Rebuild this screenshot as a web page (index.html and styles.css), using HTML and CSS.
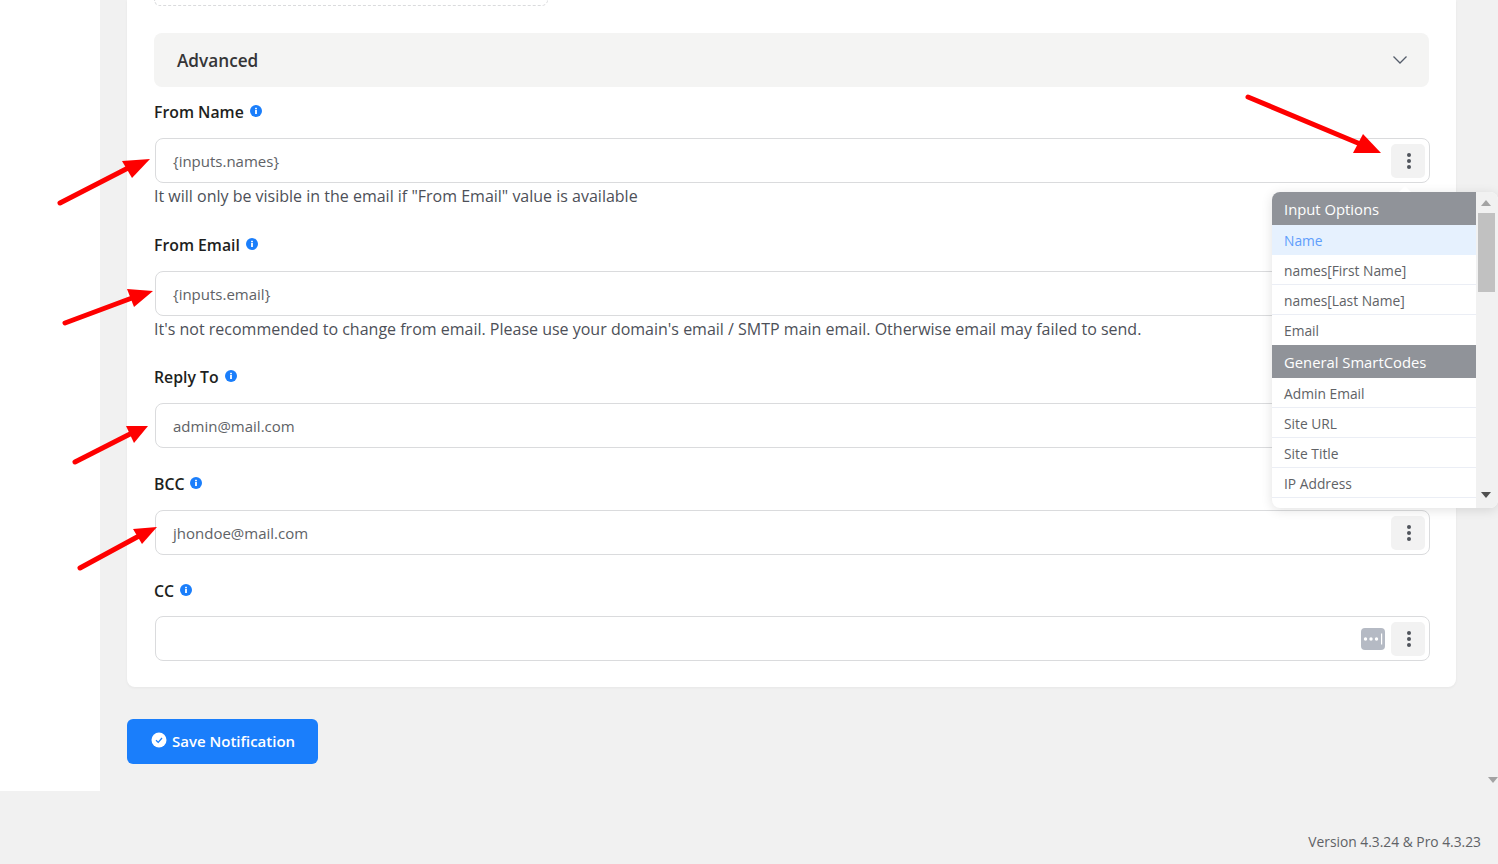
FILE: index.html
```html
<!DOCTYPE html>
<html lang="en">
<head>
<meta charset="utf-8">
<title>Notification settings</title>
<link rel="stylesheet" href="styles.css">
</head>
<body>
<div class="page">
  <div class="top">
    <aside class="sidebar"></aside>
    <main class="main">
      <section class="card">
        <div class="dashed"></div>
        <div class="advanced">
          <span>Advanced</span>
          <svg class="chevron" width="16" height="16" viewBox="0 0 16 16"><path d="M1.5 4.5 8 11l6.500-6.500" fill="none" stroke="#555d6b" stroke-width="1.300"/></svg>
        </div>

        <div class="label l-name">From Name<svg class="info" viewBox="0 0 12 12"><circle cx="6" cy="6" r="6" fill="#1a7efb"/><rect x="5.100" y="5" width="1.800" height="4" fill="#fff"/><rect x="5.100" y="2.800" width="1.800" height="1.500" fill="#fff"/></svg></div>
        <div class="input">
          <span class="value">{inputs.names}</span>
          <button class="kebab" type="button"><i></i><i></i><i></i></button>
        </div>
        <p class="help">It will only be visible in the email if "From Email" value is available</p>

        <div class="label l-email">From Email<svg class="info" viewBox="0 0 12 12"><circle cx="6" cy="6" r="6" fill="#1a7efb"/><rect x="5.100" y="5" width="1.800" height="4" fill="#fff"/><rect x="5.100" y="2.800" width="1.800" height="1.500" fill="#fff"/></svg></div>
        <div class="input">
          <span class="value">{inputs.email}</span>
          <button class="kebab" type="button"><i></i><i></i><i></i></button>
        </div>
        <p class="help">It's not recommended to change from email. Please use your domain's email / SMTP main email. Otherwise email may failed to send.</p>

        <div class="label l-reply">Reply To<svg class="info" viewBox="0 0 12 12"><circle cx="6" cy="6" r="6" fill="#1a7efb"/><rect x="5.100" y="5" width="1.800" height="4" fill="#fff"/><rect x="5.100" y="2.800" width="1.800" height="1.500" fill="#fff"/></svg></div>
        <div class="input">
          <span class="value">admin@mail.com</span>
          <button class="kebab" type="button"><i></i><i></i><i></i></button>
        </div>

        <div class="label l-bcc">BCC<svg class="info" viewBox="0 0 12 12"><circle cx="6" cy="6" r="6" fill="#1a7efb"/><rect x="5.100" y="5" width="1.800" height="4" fill="#fff"/><rect x="5.100" y="2.800" width="1.800" height="1.500" fill="#fff"/></svg></div>
        <div class="input">
          <span class="value">jhondoe@mail.com</span>
          <button class="kebab" type="button"><i></i><i></i><i></i></button>
        </div>

        <div class="label l-cc">CC<svg class="info" viewBox="0 0 12 12"><circle cx="6" cy="6" r="6" fill="#1a7efb"/><rect x="5.100" y="5" width="1.800" height="4" fill="#fff"/><rect x="5.100" y="2.800" width="1.800" height="1.500" fill="#fff"/></svg></div>
        <div class="input">
          <span class="value"></span>
          <svg class="keyicon" width="24" height="22" viewBox="0 0 24 22"><rect width="24" height="22" rx="4" fill="#b5bac4"/><circle cx="4.500" cy="11" r="1.700" fill="#fff"/><circle cx="10" cy="11" r="1.700" fill="#fff"/><circle cx="15.500" cy="11" r="1.700" fill="#fff"/><rect x="20" y="5.500" width="1.200" height="11" fill="#fff"/></svg>
          <button class="kebab" type="button"><i></i><i></i><i></i></button>
        </div>
      </section>

      <button class="save" type="button">
        <svg width="16" height="16" viewBox="0 0 16 16"><circle cx="8" cy="8" r="7.500" fill="#fff"/><path d="M5 8.300 7.200 10.400 11 6" fill="none" stroke="#1a7efb" stroke-width="1.300"/></svg>
        <span>Save Notification</span>
      </button>
    </main>
  </div>
  <footer class="footer">Version 4.3.24 &amp; Pro 4.3.23</footer>
</div>

<svg class="arrows" width="1498" height="864" viewBox="0 0 1498 864">
  <g stroke="#fe0000" stroke-width="5" stroke-linecap="round" fill="none">
    <path d="M1248 97 1365 146"/>
    <path d="M60 203 130 167"/>
    <path d="M65 323 132 298"/>
    <path d="M75 462 132 433"/>
    <path d="M80 568 139 536"/>
  </g>
  <g fill="#fe0000">
    <path d="M1381 153 1363 134 1353 153Z"/>
    <path d="M150 159 122 161 132 178Z"/>
    <path d="M153 291 127 289 134 307Z"/>
    <path d="M148 426 126 426 134 443Z"/>
    <path d="M157 527 133 529 142 544Z"/>
  </g>
</svg>

<div class="popper">
  <span class="caret"></span>
  <div class="list">
    <div class="group">Input Options</div>
    <div class="item active">Name</div>
    <div class="item">names[First Name]</div>
    <div class="item">names[Last Name]</div>
    <div class="item plain">Email</div>
    <div class="group">General SmartCodes</div>
    <div class="item">Admin Email</div>
    <div class="item">Site URL</div>
    <div class="item">Site Title</div>
    <div class="item">IP Address</div>
  </div>
  <div class="scrollbar">
    <span class="up"></span>
    <span class="thumb"></span>
    <span class="down"></span>
  </div>
</div>
<span class="page-down"></span>
</body>
</html>
```

FILE: styles.css
```css
* { box-sizing: border-box; }
html, body { margin: 0; height: 864px; overflow: hidden; }
body {
  position: relative;
  background: #f1f1f1;
  font-family: "Open Sans", "Liberation Sans", sans-serif;
  font-size: 16px;
  color: #1e1f21;
}
.page { display: flex; flex-direction: column; height: 864px; }
.top { display: flex; height: 791px; }
.sidebar { width: 100px; background: #fff; }
.main { flex: 1; padding-left: 27px; }
.card {
  width: 1329px;
  height: 687px;
  padding: 0 27px;
  background: #fff;
  border-radius: 0 0 8px 8px;
  box-shadow: 0 1px 3px rgba(30, 31, 33, 0.05);
}
.dashed {
  width: 394px;
  height: 6px;
  border: 1px dashed #dadbdd;
  border-top: 0;
  border-radius: 0 0 8px 8px;
}
.advanced {
  display: flex;
  align-items: center;
  justify-content: space-between;
  height: 54px;
  margin-top: 27px;
  padding: 0 21px 0 23px;
  background: #f4f4f3;
  border-radius: 8px;
  font-size: 17.200px;
  font-weight: 600;
  color: #353537;
}
.label {
  display: flex;
  align-items: center;
  gap: 6px;
  height: 24px;
  font-size: 15.800px;
  font-weight: 600;
  color: #1e1f21;
}
.l-name { margin-top: 13px; margin-bottom: 14px; }
.l-email { margin-top: 25px; margin-bottom: 14px; }
.l-reply { margin-top: 24px; margin-bottom: 14px; }
.l-bcc { margin-top: 24px; margin-bottom: 14px; }
.l-cc { margin-top: 24px; margin-bottom: 13px; }
.info { width: 12px; height: 12px; margin-top: -2px; }
.input {
  display: flex;
  align-items: center;
  width: 1275px;
  height: 45px;
  margin-left: 1px;
  padding: 0 4px 0 17px;
  background: #fff;
  border: 1px solid #dadbdd;
  border-radius: 8px;
  font-size: 15px;
  color: #606266;
}
.value { flex: 1; }
.keyicon { margin-right: 6px; }
.kebab {
  display: flex;
  flex-direction: column;
  align-items: center;
  justify-content: center;
  gap: 2px;
  width: 34px;
  height: 34px;
  padding: 0 0 0 1px;
  background: #f2f2f2;
  border: 0;
  border-radius: 5px;
}
.kebab i { width: 4px; height: 4px; background: #50545c; border-radius: 50%; }
.help {
  height: 24px;
  margin: 1px 0 0;
  line-height: 24px;
  color: #4d5058;
}
.save {
  display: flex;
  align-items: center;
  gap: 5px;
  width: 191px;
  height: 45px;
  margin-top: 32px;
  padding: 0 0 4px 24px;
  background: #1a7efb;
  border: 0;
  border-radius: 6px;
  font: 600 15px "Open Sans", "Liberation Sans", sans-serif;
  color: #fff;
}
.save span { padding-top: 2px; }
.footer {
  padding: 41px 17px 0 0;
  text-align: right;
  font-size: 13.800px;
  color: #606266;
}
.arrows { position: absolute; top: 0; left: 0; pointer-events: none; }
.popper {
  position: absolute;
  top: 192px;
  left: 1272px;
  display: flex;
  width: 226px;
  height: 316px;
  background: #fff;
  border-radius: 8px;
  box-shadow: 0 2px 12px rgba(0, 0, 0, 0.12);
}
.caret {
  position: absolute;
  top: -6px;
  left: 127px;
  border-left: 6px solid transparent;
  border-right: 6px solid transparent;
  border-bottom: 6px solid #fff;
}
.list { width: 204px; font-size: 13.800px; color: #606266; }
.group {
  display: flex;
  align-items: center;
  height: 33px;
  padding-left: 12px;
  background: #909399;
  color: #fff;
  font-size: 14.800px;
}
.group:first-child { border-radius: 8px 0 0 0; }
.item {
  display: flex;
  align-items: center;
  height: 30px;
  padding: 2px 0 0 12px;
  border-bottom: 1px solid #ebeef5;
}
.item.active { background: #e6f1fe; color: #5f9efc; border-bottom: 0; padding-top: 0; }
.item.plain { border-bottom: 0; padding-top: 0; }
.scrollbar {
  position: relative;
  flex: 1;
  background: #f1f1f1;
  border-radius: 0 8px 8px 0;
}
.up, .down, .page-down {
  position: absolute;
  width: 0;
  height: 0;
  border-left: 5px solid transparent;
  border-right: 5px solid transparent;
}
.up { top: 8px; left: 5px; border-bottom: 6px solid #a3a3a3; }
.down { top: 300px; left: 5px; border-top: 6px solid #505050; }
.thumb {
  position: absolute;
  top: 21px;
  left: 2px;
  width: 17px;
  height: 79px;
  background: #c1c1c1;
}
.page-down { top: 777px; left: 1488px; border-top: 6px solid #a3a3a3; }
```
